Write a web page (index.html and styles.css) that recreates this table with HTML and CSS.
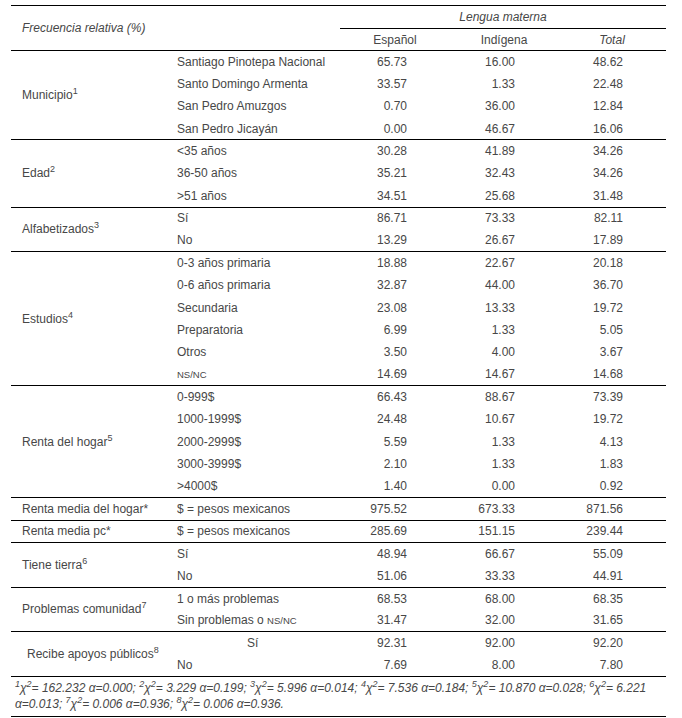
FILE: index.html
```html
<!DOCTYPE html>
<html lang="es">
<head>
<meta charset="utf-8">
<title>Frecuencia relativa</title>
<link rel="stylesheet" href="styles.css">
</head>
<body>
<table class="tbl">
  <colgroup>
    <col class="c-cat"><col class="c-sub"><col class="c-num"><col class="c-num2"><col class="c-num2">
  </colgroup>
  <thead>
    <tr class="h1">
      <th class="freq" colspan="2" rowspan="2">Frecuencia relativa (%)</th>
      <th class="lengua" colspan="3">Lengua materna</th>
    </tr>
    <tr class="h2">
      <th>Español</th><th>Indígena</th><th class="it">Total</th>
    </tr>
  </thead>
  <tbody>
    <tr class="g"><td class="cat" rowspan="4">Municipio<sup>1</sup></td><td class="sub">Santiago Pinotepa Nacional</td><td class="n">65.73</td><td class="n">16.00</td><td class="n">48.62</td></tr>
    <tr><td class="sub">Santo Domingo Armenta</td><td class="n">33.57</td><td class="n">1.33</td><td class="n">22.48</td></tr>
    <tr><td class="sub">San Pedro Amuzgos</td><td class="n">0.70</td><td class="n">36.00</td><td class="n">12.84</td></tr>
    <tr><td class="sub">San Pedro Jicayán</td><td class="n">0.00</td><td class="n">46.67</td><td class="n">16.06</td></tr>

    <tr class="g"><td class="cat" rowspan="3">Edad<sup>2</sup></td><td class="sub">&lt;35 años</td><td class="n">30.28</td><td class="n">41.89</td><td class="n">34.26</td></tr>
    <tr><td class="sub">36-50 años</td><td class="n">35.21</td><td class="n">32.43</td><td class="n">34.26</td></tr>
    <tr><td class="sub">&gt;51 años</td><td class="n">34.51</td><td class="n">25.68</td><td class="n">31.48</td></tr>

    <tr class="g"><td class="cat" rowspan="2">Alfabetizados<sup>3</sup></td><td class="sub">Sí</td><td class="n">86.71</td><td class="n">73.33</td><td class="n">82.11</td></tr>
    <tr><td class="sub">No</td><td class="n">13.29</td><td class="n">26.67</td><td class="n">17.89</td></tr>

    <tr class="g"><td class="cat" rowspan="6">Estudios<sup>4</sup></td><td class="sub">0-3 años primaria</td><td class="n">18.88</td><td class="n">22.67</td><td class="n">20.18</td></tr>
    <tr><td class="sub">0-6 años primaria</td><td class="n">32.87</td><td class="n">44.00</td><td class="n">36.70</td></tr>
    <tr><td class="sub">Secundaria</td><td class="n">23.08</td><td class="n">13.33</td><td class="n">19.72</td></tr>
    <tr><td class="sub">Preparatoria</td><td class="n">6.99</td><td class="n">1.33</td><td class="n">5.05</td></tr>
    <tr><td class="sub">Otros</td><td class="n">3.50</td><td class="n">4.00</td><td class="n">3.67</td></tr>
    <tr><td class="sub"><span class="sc">NS/NC</span></td><td class="n">14.69</td><td class="n">14.67</td><td class="n">14.68</td></tr>

    <tr class="g"><td class="cat" rowspan="5">Renta del hogar<sup>5</sup></td><td class="sub">0-999$</td><td class="n">66.43</td><td class="n">88.67</td><td class="n">73.39</td></tr>
    <tr><td class="sub">1000-1999$</td><td class="n">24.48</td><td class="n">10.67</td><td class="n">19.72</td></tr>
    <tr><td class="sub">2000-2999$</td><td class="n">5.59</td><td class="n">1.33</td><td class="n">4.13</td></tr>
    <tr><td class="sub">3000-3999$</td><td class="n">2.10</td><td class="n">1.33</td><td class="n">1.83</td></tr>
    <tr><td class="sub">&gt;4000$</td><td class="n">1.40</td><td class="n">0.00</td><td class="n">0.92</td></tr>

    <tr class="g"><td class="cat">Renta media del hogar*</td><td class="sub">$ = pesos mexicanos</td><td class="n">975.52</td><td class="n">673.33</td><td class="n">871.56</td></tr>
    <tr class="g"><td class="cat">Renta media pc*</td><td class="sub">$ = pesos mexicanos</td><td class="n">285.69</td><td class="n">151.15</td><td class="n">239.44</td></tr>

    <tr class="g"><td class="cat" rowspan="2">Tiene tierra<sup>6</sup></td><td class="sub">Sí</td><td class="n">48.94</td><td class="n">66.67</td><td class="n">55.09</td></tr>
    <tr><td class="sub">No</td><td class="n">51.06</td><td class="n">33.33</td><td class="n">44.91</td></tr>

    <tr class="g"><td class="cat" rowspan="2">Problemas comunidad<sup>7</sup></td><td class="sub">1 o más problemas</td><td class="n">68.53</td><td class="n">68.00</td><td class="n">68.35</td></tr>
    <tr><td class="sub">Sin problemas o <span class="sc">NS/NC</span></td><td class="n">31.47</td><td class="n">32.00</td><td class="n">31.65</td></tr>

    <tr class="g"><td class="cat cat-in" rowspan="2">Recibe apoyos públicos<sup>8</sup></td><td class="sub sub-in">Sí</td><td class="n">92.31</td><td class="n">92.00</td><td class="n">92.20</td></tr>
    <tr><td class="sub">No</td><td class="n">7.69</td><td class="n">8.00</td><td class="n">7.80</td></tr>
  </tbody>
  <tfoot>
    <tr>
      <td class="note" colspan="5"><sup>1</sup>χ<sup>2</sup>= 162.232 α=0.000; <sup>2</sup>χ<sup>2</sup>= 3.229 α=0.199; <sup>3</sup>χ<sup>2</sup>= 5.996 α=0.014; <sup>4</sup>χ<sup>2</sup>= 7.536 α=0.184; <sup>5</sup>χ<sup>2</sup>= 10.870 α=0.028; <sup>6</sup>χ<sup>2</sup>= 6.221<br>α=0.013; <sup>7</sup>χ<sup>2</sup>= 0.006 α=0.936; <sup>8</sup>χ<sup>2</sup>= 0.006 α=0.936.</td>
    </tr>
  </tfoot>
</table>
</body>
</html>
```

FILE: styles.css
```css
html, body {
  margin: 0;
  padding: 0;
  background: #ffffff;
}

body {
  padding: 5px 0 0 11px;
  font-family: "Liberation Sans", Arial, sans-serif;
  font-size: 12px;
  color: #474747;
}

.tbl {
  border-collapse: collapse;
  table-layout: fixed;
  width: 655px;
}

.c-cat { width: 159px; }
.c-sub { width: 170px; }
.c-num { width: 110px; }
.c-num2 { width: 108px; }

.tbl th,
.tbl td {
  padding: 0;
  font-weight: normal;
  line-height: 14px;
  white-space: nowrap;
}

.tbl thead tr:first-child th {
  border-top: 1px solid #000;
}

.h1 { height: 23px; }
.h2 { height: 22px; }

.h2 th {
  text-align: center;
  vertical-align: middle;
  border-bottom: 1px solid #000;
}

.freq {
  text-align: left;
  padding-left: 11px !important;
  font-style: italic;
  vertical-align: middle;
  border-bottom: 1px solid #000;
}

.lengua {
  text-align: center;
  font-style: italic;
  border-bottom: 1px solid #000;
  vertical-align: middle;
}

.it { font-style: italic; }

.tbl tbody tr {
  height: 22.36px;
}

.tbl tbody tr.g td {
  border-top: 1px solid #000;
}

.cat {
  padding-left: 11px !important;
  vertical-align: middle;
}

.cat-in {
  padding-left: 16px !important;
}

.sub {
  padding-left: 7px !important;
  vertical-align: middle;
}

.sub-in {
  padding-left: 77px !important;
}

.n {
  text-align: right;
  padding-right: 43px !important;
  vertical-align: middle;
}

sup {
  font-size: 9px;
  line-height: 0;
  vertical-align: 5px;
}

.sc {
  font-size: 9.5px;
}

.note {
  border-top: 1px solid #000;
  border-bottom: 1px solid #000;
  font-style: italic;
  line-height: 16px !important;
  padding: 3px 0 4px 4px !important;
}
```
